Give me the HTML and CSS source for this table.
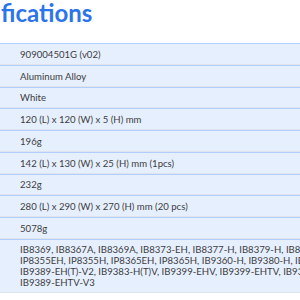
FILE: index.html
```html
<!DOCTYPE html>
<html>
<head>
<meta charset="utf-8">
<link rel="stylesheet" href="styles.css">
</head>
<body>
<div class="page">
  <h2 class="title">fications</h2>
  <div class="specs">
    <div class="row">909004501G (v02)</div>
    <div class="row">Aluminum Alloy</div>
    <div class="row">White</div>
    <div class="row">120 (L) x 120 (W) x 5 (H) mm</div>
    <div class="row">196g</div>
    <div class="row">142 (L) x 130 (W) x 25 (H) mm (1pcs)</div>
    <div class="row">232g</div>
    <div class="row">280 (L) x 290 (W) x 270 (H) mm (20 pcs)</div>
    <div class="row">5078g</div>
    <div class="row multi">
      <span class="line">IB8369, IB8367A, IB8369A, IB8373-EH, IB8377-H, IB8379-H, IB8380-EHV, IB8382-EHT</span>
      <span class="line">IP8355EH, IP8355H, IP8365EH, IP8365H, IB9360-H, IB9380-H, IB9381-HT, IB9387-EHT</span>
      <span class="line">IB9389-EH(T)-V2, IB9383-H(T)V, IB9399-EHV, IB9399-EHTV, IB9389-EHV-V2, IB9389-EH</span>
      <span class="line">IB9389-EHTV-V3</span>
    </div>
  </div>
</div>
</body>
</html>
```

FILE: styles.css
```css
html, body {
  margin: 0;
  padding: 0;
  background: #ffffff;
  overflow: hidden;
}
.page {
  width: 300px;
  overflow: hidden;
  font-family: Lato, "Open Sans", sans-serif;
}
.title {
  margin: 0;
  height: 43px;
  padding: 0 0 0 1px;
  font-size: 24px;
  line-height: 26px;
  font-weight: 700;
  color: #2b74ea;
  box-sizing: border-box;
}
.specs {
  display: flex;
  flex-direction: column;
  width: 560px;
}
.row {
  background: #e6effe;
  border-top: 1px solid #b2cefa;
  border-bottom: 1px solid #dfe4ec;
  padding: 4.75px 0 4px 20px;
  font-size: 9.6px;
  line-height: 11px;
  color: #3d3d3d;
  white-space: nowrap;
}
.multi {
  display: flex;
  flex-direction: column;
  padding-top: 4px;
  padding-bottom: 4px;
}
.line {
  display: block;
}
```
